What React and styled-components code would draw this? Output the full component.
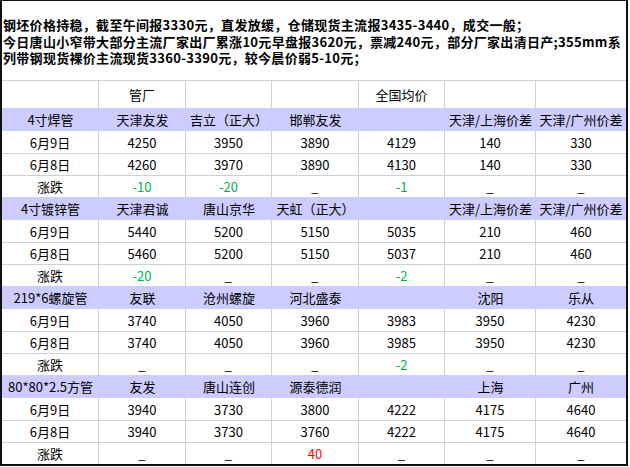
import React from 'react';
import styled, { createGlobalStyle } from 'styled-components';

const GlobalStyle = createGlobalStyle`
  html, body {
    margin: 0;
    padding: 0;
    background: #fff;
  }
`;

const COLS = '97px 87px 86px 87px 86px 91px 90px';

const sections = [
  {
    head: ['4寸焊管', '天津友发', '吉立（正大）', '邯郸友发', '', '天津/上海价差', '天津/广州价差'],
    d9: ['4250', '3950', '3890', '4129', '140', '330'],
    d8: ['4260', '3970', '3890', '4130', '140', '330'],
    diff: ['-10', '-20', '_', '-1', '_', '_'],
  },
  {
    head: ['4寸镀锌管', '天津君诚', '唐山京华', '天虹（正大）', '', '天津/上海价差', '天津/广州价差'],
    d9: ['5440', '5200', '5150', '5035', '210', '460'],
    d8: ['5460', '5200', '5150', '5037', '210', '460'],
    diff: ['-20', '_', '_', '-2', '_', '_'],
  },
  {
    head: ['219*6螺旋管', '友联', '沧州螺旋', '河北盛泰', '', '沈阳', '乐从'],
    d9: ['3740', '4050', '3960', '3983', '3950', '4230'],
    d8: ['3740', '4050', '3960', '3985', '3950', '4230'],
    diff: ['_', '_', '_', '-2', '_', '_'],
  },
  {
    head: ['80*80*2.5方管', '友发', '唐山连创', '源泰德润', '', '上海', '广州'],
    d9: ['3940', '3730', '3800', '4222', '4175', '4640'],
    d8: ['3940', '3730', '3760', '4222', '4175', '4640'],
    diff: ['_', '_', '40', '_', '_', '_'],
  },
];

const toneOf = (v) => {
  if (v.startsWith('-')) return 'down';
  if (v !== '_' && v !== '') return 'up';
  return 'none';
};

const Frame = styled.div`
  width: 628px;
  height: 466px;
  box-sizing: border-box;
  border-top: 1px solid #111;
  border-left: 2px solid #111;
  border-right: 2px solid #111;
  border-bottom: 2px solid #111;
  background: #fff;
  overflow: hidden;
`;

const Notice = styled.div`
  height: 79px;
  box-sizing: border-box;
  padding: 16px 0 0 1px;
  font-family: 'Noto Sans CJK SC', 'Noto Sans', sans-serif;
  font-weight: 700;
  font-size: 13px;
  line-height: 16.5px;
  letter-spacing: 0.3px;
  color: #000;
  white-space: nowrap;
`;

const Line = styled.div`
  height: 16.5px;
`;

const Row = styled.div`
  display: grid;
  grid-template-columns: ${COLS};
  height: ${(p) => (p.$band ? 23 : p.$top ? 28 : 22)}px;
  box-sizing: border-box;
  background: ${(p) => (p.$band ? '#ccccff' : '#fff')};
  border-top: ${(p) => (p.$lined ? '1px solid #d0d0d0' : 'none')};
  font-family: 'Noto Sans CJK SC', 'Noto Sans', sans-serif;
  font-size: 13px;
  color: #000;
`;

const Cell = styled.div`
  display: flex;
  align-items: center;
  justify-content: center;
  box-sizing: border-box;
  white-space: nowrap;
  border-right: ${(p) => (p.$grid ? '1px solid #d0d0d0' : 'none')};
  color: ${(p) => (p.$tone === 'down' ? '#00b050' : p.$tone === 'up' ? '#ff0000' : '#000')};
  &:last-child {
    border-right: none;
  }
`;

const DataRow = ({ label, values, lined, diff }) => (
  <Row $lined={lined}>
    <Cell $grid>{label}</Cell>
    {values.map((v, i) => (
      <Cell key={i} $grid $tone={diff ? toneOf(v) : 'none'}>
        {v}
      </Cell>
    ))}
  </Row>
);

export default function App() {
  return (
    <>
      <GlobalStyle />
      <Frame>
        <Notice>
          <Line>钢坯价格持稳，截至午间报3330元，直发放缓，仓储现货主流报3435-3440，成交一般；</Line>
          <Line>今日唐山小窄带大部分主流厂家出厂累涨10元早盘报3620元，票减240元，部分厂家出清日产;355mm系</Line>
          <Line>列带钢现货裸价主流现货3360-3390元，较今晨价弱5-10元；</Line>
        </Notice>
        <Row $top $lined>
          <Cell $grid />
          <Cell $grid>管厂</Cell>
          <Cell $grid />
          <Cell $grid />
          <Cell $grid>全国均价</Cell>
          <Cell $grid />
          <Cell />
        </Row>
        {sections.map((s, i) => (
          <React.Fragment key={i}>
            <Row $band>
              {s.head.map((h, j) => (
                <Cell key={j}>{h}</Cell>
              ))}
            </Row>
            <DataRow label="6月9日" values={s.d9} />
            <DataRow label="6月8日" values={s.d8} lined />
            <DataRow label="涨跌" values={s.diff} lined diff />
          </React.Fragment>
        ))}
      </Frame>
    </>
  );
}
